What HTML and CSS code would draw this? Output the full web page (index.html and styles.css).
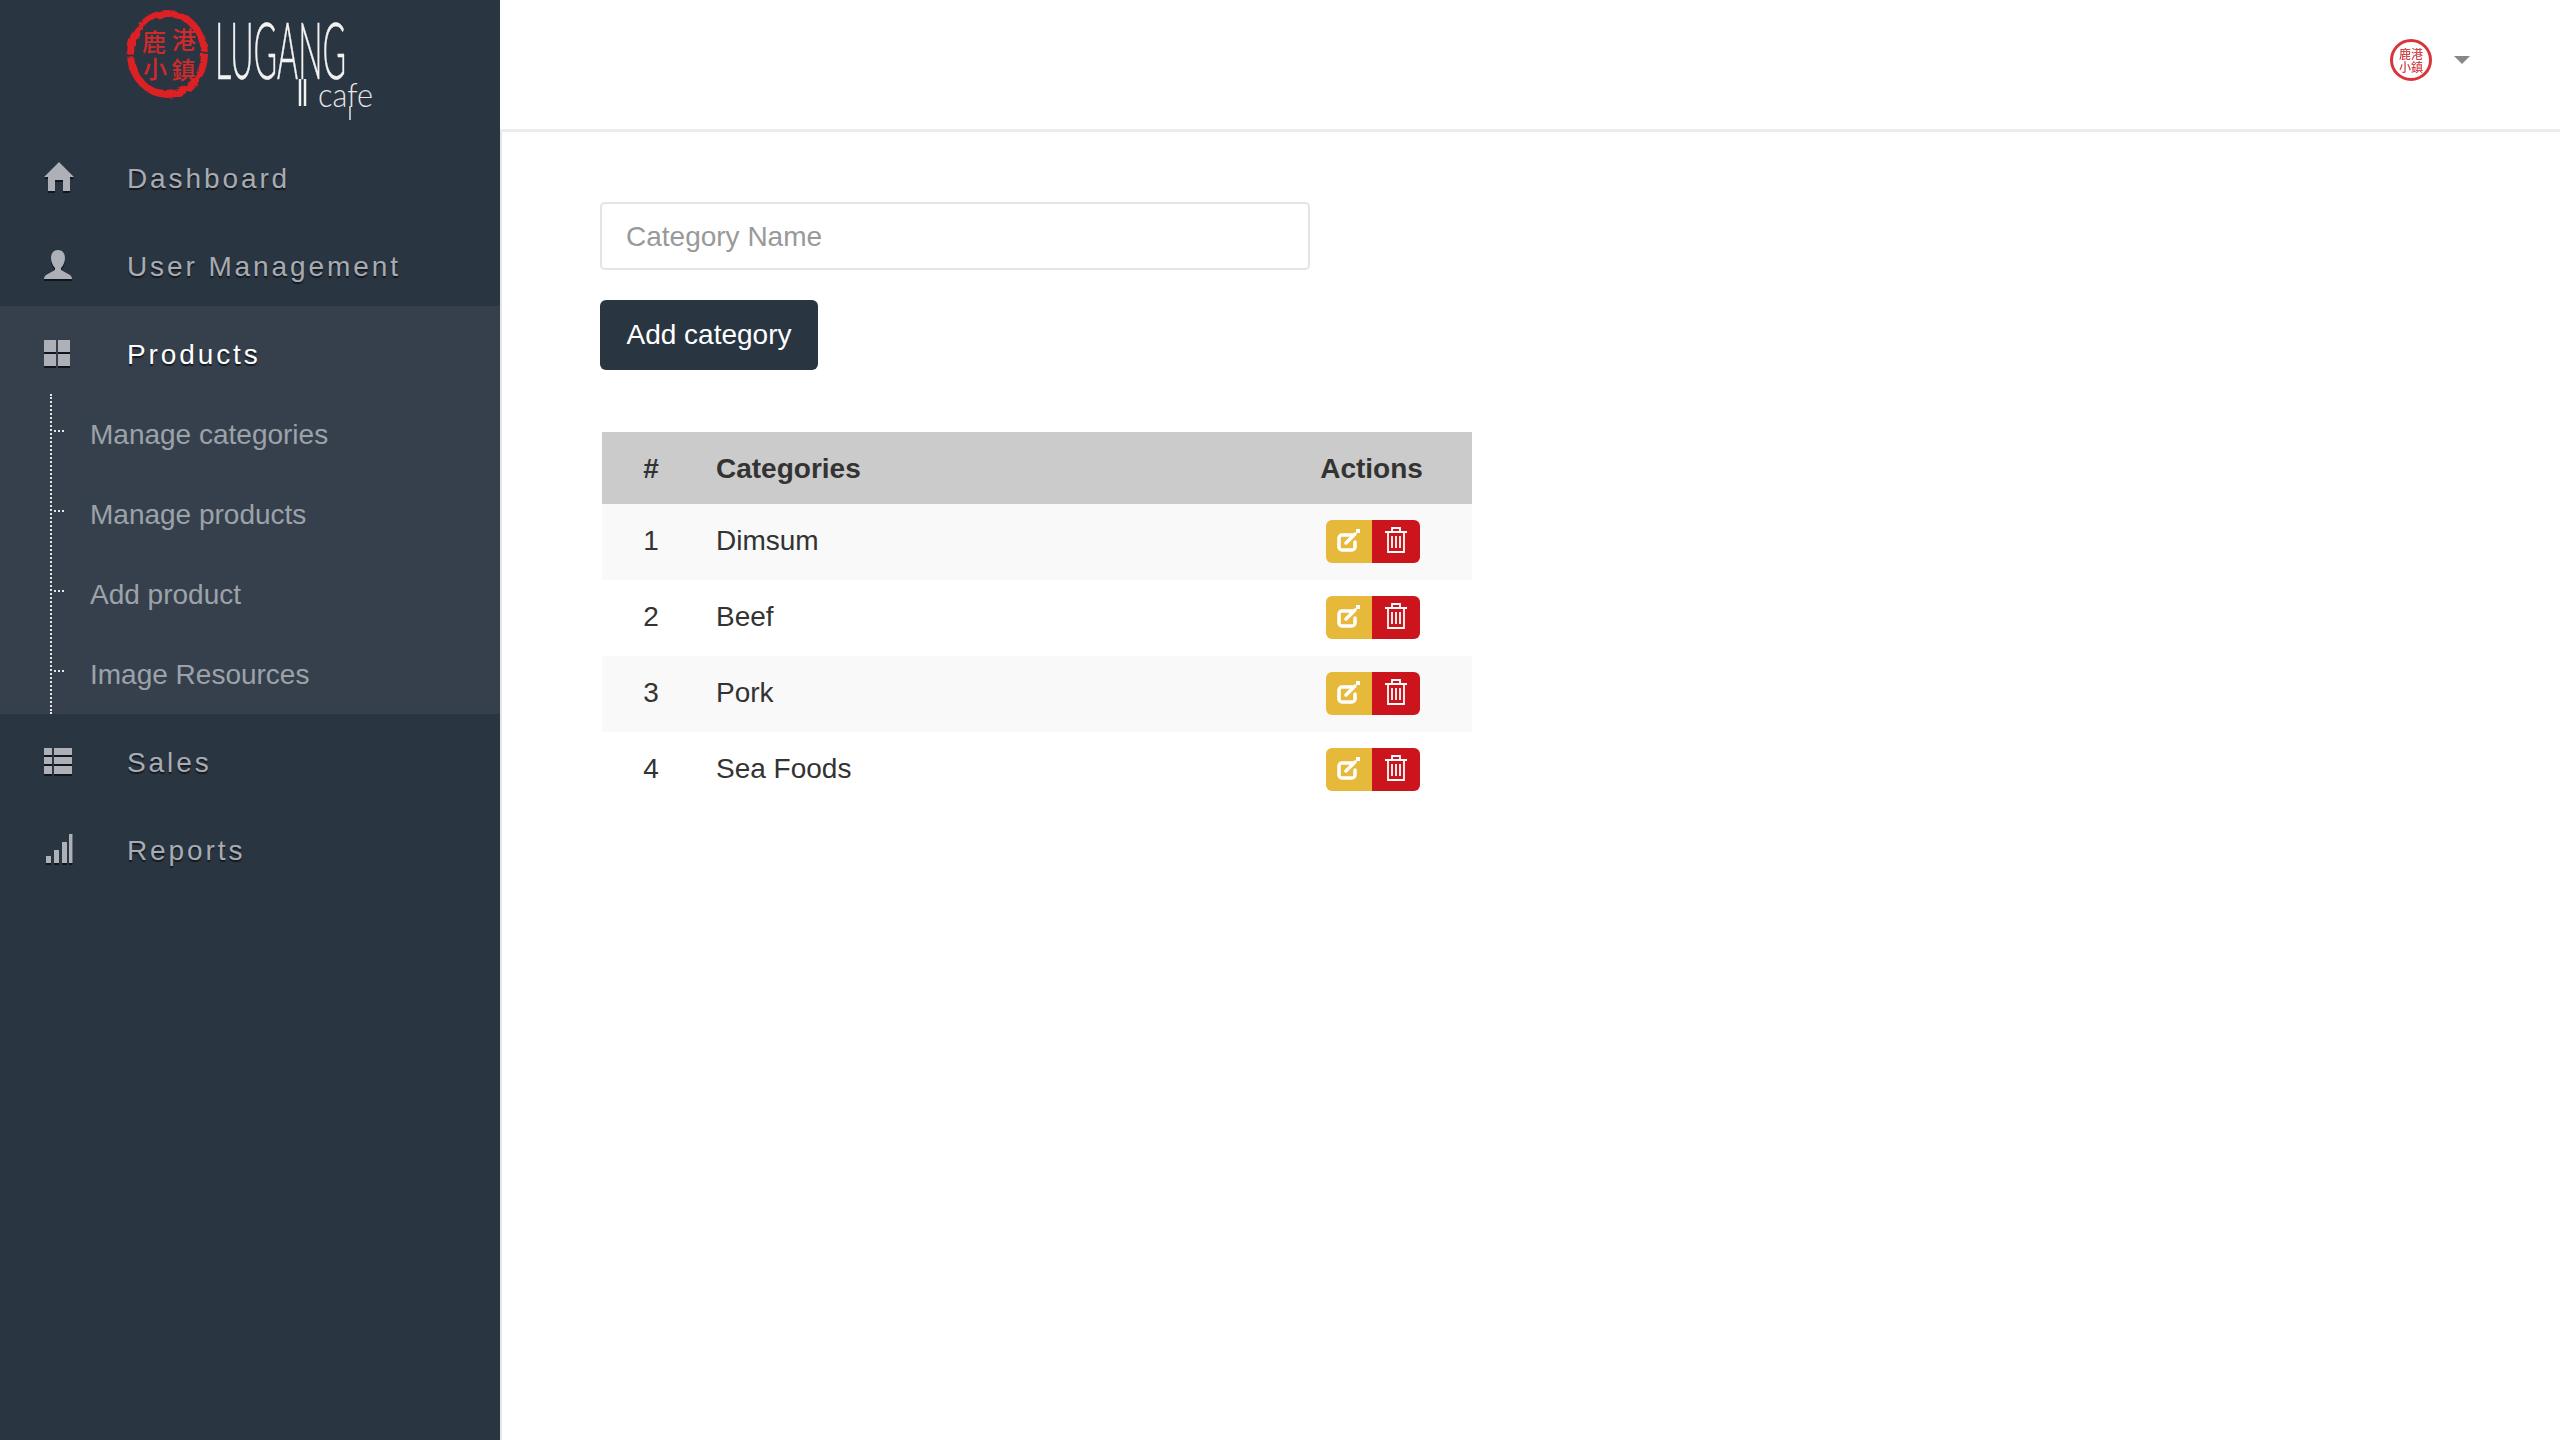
FILE: index.html
```html
<!DOCTYPE html>
<html lang="en">
<head>
<meta charset="utf-8">
<title>Lugang Cafe - Manage categories</title>
<link rel="stylesheet" href="styles.css">
</head>
<body>
<div class="app">
  <aside class="sidebar">
    <div class="brand">
      <svg class="logo" viewBox="0 0 250 122" width="250" height="122">
        <defs>
          <filter id="rough" x="-10%" y="-10%" width="120%" height="120%" color-interpolation-filters="sRGB">
            <feTurbulence type="fractalNoise" baseFrequency="0.12" numOctaves="2" seed="4"/>
            <feDisplacementMap in="SourceGraphic" scale="5"/>
          </filter>
          <filter id="soft"><feGaussianBlur stdDeviation="0.45"/></filter>
        </defs>
        <ellipse class="ring" cx="42.500" cy="44" rx="37" ry="40.500" filter="url(#rough)"/>
        <text class="seal" x="29 59 30 58.500" y="41 39 68 69">鹿港小鎮</text>
        <text class="wordmark" x="90" y="69" textLength="131" lengthAdjust="spacingAndGlyphs">LUGANG</text>
        <line class="leg" x1="175" y1="69" x2="175" y2="96"/>
        <line class="leg" x1="180" y1="69" x2="180" y2="96"/>
        <text class="cafe" x="193" y="97" textLength="55" lengthAdjust="spacingAndGlyphs">cafe</text>
        <line class="leg-thin" x1="225" y1="96" x2="225" y2="110"/>
      </svg>
    </div>
    <nav class="nav">
      <a class="nav-item">
        <svg class="nav-icon" viewBox="0 0 30 30"><path d="M15 0 30 15h-4v14h-7V18h-8v11H4V15H0z"/></svg>
        <span class="nav-label">Dashboard</span>
      </a>
      <a class="nav-item">
        <svg class="nav-icon" viewBox="0 0 30 30"><path d="M14 0c5 0 7 4 7 8 0 4-2 8-4 10v2l9 5c1 1 2 2 2 4H0c0-2 1-3 2-4l9-5v-2C9 16 7 12 7 8c0-4 2-8 7-8z"/></svg>
        <span class="nav-label">User Management</span>
      </a>
      <div class="group">
        <a class="nav-item nav-item-active">
          <svg class="nav-icon" viewBox="0 0 30 30"><path d="M0 2h12v12H0zM14 2h12v12H14zM0 16h12v12H0zM14 16h12v12H14z"/></svg>
          <span class="nav-label">Products</span>
        </a>
        <ul class="subnav">
          <li class="sub-item">Manage categories</li>
          <li class="sub-item">Manage products</li>
          <li class="sub-item">Add product</li>
          <li class="sub-item">Image Resources</li>
        </ul>
      </div>
      <a class="nav-item">
        <svg class="nav-icon" viewBox="0 0 30 30"><path d="M0 2h8v7H0zM10 2h18v7H10zM0 11h8v7H0zM10 11h18v7H10zM0 20h8v8H0zM10 20h18v8H10z"/></svg>
        <span class="nav-label">Sales</span>
      </a>
      <a class="nav-item">
        <svg class="nav-icon" viewBox="0 0 30 30"><path d="M2 22h5v7H2zM10 16h5v13h-5zM18 8h5v21h-5zM25 0h3.500v29H25z"/></svg>
        <span class="nav-label">Reports</span>
      </a>
    </nav>
  </aside>
  <div class="main">
    <header class="topbar">
      <div class="profile">
        <svg class="avatar" viewBox="0 0 44 44" width="44" height="44">
          <g filter="url(#soft)">
            <circle class="avatar-ring" cx="22" cy="22" r="19.500"/>
            <text class="avatar-seal" x="16 28 16 28" y="21 21 34 34">鹿港小鎮</text>
          </g>
        </svg>
        <span class="caret"></span>
      </div>
    </header>
    <main class="content">
      <input class="field" type="text" placeholder="Category Name">
      <button class="btn-primary" type="button">Add category</button>
      <table class="table">
        <colgroup>
          <col class="col-num">
          <col class="col-name">
          <col class="col-actions">
        </colgroup>
        <thead>
          <tr><th class="center">#</th><th>Categories</th><th class="center">Actions</th></tr>
        </thead>
        <tbody>
          <tr>
            <td class="center">1</td><td>Dimsum</td>
            <td class="center"><div class="actions">
              <button class="act act-edit" type="button"><svg class="act-icon" viewBox="0 0 26 24"><path class="stroke" d="M16 6H6a3 3 0 0 0-3 3v9a3 3 0 0 0 3 3h10a3 3 0 0 0 3-3v-5"/><path class="stroke" d="M10 14 19 5"/><path class="solid" d="M20 0h4v4h-4z"/></svg></button>
              <button class="act act-del" type="button"><svg class="act-icon" viewBox="0 0 22 26"><path class="stroke-thin" d="M0 5h22M7 5V1h8v4M3 5v20h16V5M7 9v12M11 9v12M15 9v12"/></svg></button>
            </div></td>
          </tr>
          <tr>
            <td class="center">2</td><td>Beef</td>
            <td class="center"><div class="actions">
              <button class="act act-edit" type="button"><svg class="act-icon" viewBox="0 0 26 24"><path class="stroke" d="M16 6H6a3 3 0 0 0-3 3v9a3 3 0 0 0 3 3h10a3 3 0 0 0 3-3v-5"/><path class="stroke" d="M10 14 19 5"/><path class="solid" d="M20 0h4v4h-4z"/></svg></button>
              <button class="act act-del" type="button"><svg class="act-icon" viewBox="0 0 22 26"><path class="stroke-thin" d="M0 5h22M7 5V1h8v4M3 5v20h16V5M7 9v12M11 9v12M15 9v12"/></svg></button>
            </div></td>
          </tr>
          <tr>
            <td class="center">3</td><td>Pork</td>
            <td class="center"><div class="actions">
              <button class="act act-edit" type="button"><svg class="act-icon" viewBox="0 0 26 24"><path class="stroke" d="M16 6H6a3 3 0 0 0-3 3v9a3 3 0 0 0 3 3h10a3 3 0 0 0 3-3v-5"/><path class="stroke" d="M10 14 19 5"/><path class="solid" d="M20 0h4v4h-4z"/></svg></button>
              <button class="act act-del" type="button"><svg class="act-icon" viewBox="0 0 22 26"><path class="stroke-thin" d="M0 5h22M7 5V1h8v4M3 5v20h16V5M7 9v12M11 9v12M15 9v12"/></svg></button>
            </div></td>
          </tr>
          <tr>
            <td class="center">4</td><td>Sea Foods</td>
            <td class="center"><div class="actions">
              <button class="act act-edit" type="button"><svg class="act-icon" viewBox="0 0 26 24"><path class="stroke" d="M16 6H6a3 3 0 0 0-3 3v9a3 3 0 0 0 3 3h10a3 3 0 0 0 3-3v-5"/><path class="stroke" d="M10 14 19 5"/><path class="solid" d="M20 0h4v4h-4z"/></svg></button>
              <button class="act act-del" type="button"><svg class="act-icon" viewBox="0 0 22 26"><path class="stroke-thin" d="M0 5h22M7 5V1h8v4M3 5v20h16V5M7 9v12M11 9v12M15 9v12"/></svg></button>
            </div></td>
          </tr>
        </tbody>
      </table>
    </main>
  </div>
</div>
</body>
</html>
```

FILE: styles.css
```css
* { box-sizing: border-box; }
html, body { margin: 0; height: 100%; }
body {
  font-family: "Liberation Sans", Arial, sans-serif;
  font-size: 28px;
  color: #333;
  background: #fff;
  overflow: hidden;
}
.app { display: flex; height: 1440px; }

/* sidebar */
.sidebar { flex: 0 0 500px; background: #2a3542; }
.brand { height: 130px; padding: 10px 0 0 125px; }
.logo { display: block; overflow: visible; }
.ring {
  fill: none;
  stroke: #dc2024;
  stroke-width: 7;
  stroke-dasharray: 118 3 120 2;
}
.seal {
  font-family: "Noto Sans CJK TC", sans-serif;
  font-size: 24px;
  font-weight: 500;
  fill: #cf2a2c;
  text-anchor: middle;
}
.wordmark {
  font-family: Lato, sans-serif;
  font-size: 78px;
  font-weight: 300;
  fill: #f2f2f2;
  stroke: #f2f2f2;
  stroke-width: 0.5;
}
.cafe {
  font-family: Lato, sans-serif;
  font-size: 34px;
  font-weight: 300;
  fill: #e6e6e6;
}
.leg { stroke: #f2f2f2; stroke-width: 2.5; }
.leg-thin { stroke: #e6e6e6; stroke-width: 1.5; }

.nav-item {
  display: flex;
  align-items: center;
  height: 88px;
  padding: 10px 0 0 44px;
  color: #a8acb2;
  letter-spacing: 2.9px;
  text-shadow: 0 2px 1px #14191f;
}
.nav-icon {
  flex: 0 0 30px;
  width: 30px;
  height: 30px;
  margin: 0 53px 4px 0;
  fill: #adb1b7;
  filter: drop-shadow(0 2px 0 #11161c);
}
.nav-item-active { color: #fff; }
.group { background: #36404d; }
.subnav {
  list-style: none;
  margin: 0 0 0 50px;
  padding: 0;
  border-left: 2px dotted #e8e8e8;
}
.sub-item {
  position: relative;
  height: 80px;
  line-height: 82px;
  padding-left: 38px;
  color: #9da2a9;
}
.sub-item::before {
  content: "";
  position: absolute;
  left: 2px;
  top: 36px;
  width: 12px;
  height: 2px;
  background: repeating-linear-gradient(90deg, #e8e8e8 0 2px, transparent 2px 4px);
}

/* main */
.main { flex: 1; display: flex; flex-direction: column; min-width: 0; }
.topbar {
  height: 132px;
  flex: none;
  display: flex;
  justify-content: flex-end;
  align-items: center;
  padding: 0 90px 10px 0;
  border-bottom: 3px solid #ececec;
}
.profile { display: flex; align-items: center; gap: 21px; }
.avatar { display: block; overflow: visible; }
.avatar-ring { fill: none; stroke: #d8353a; stroke-width: 3; }
.avatar-seal {
  font-family: "Noto Sans CJK TC", sans-serif;
  font-size: 12px;
  font-weight: 500;
  fill: #d2474b;
  text-anchor: middle;
}
.caret {
  width: 0;
  height: 0;
  border-left: 8px solid transparent;
  border-right: 8px solid transparent;
  border-top: 8px solid #888;
}
.content {
  flex: 1;
  display: flex;
  flex-direction: column;
  align-items: flex-start;
  padding: 70px 0 0 98px;
  border-left: 2px solid #e6e6e6;
}
.field {
  display: block;
  width: 710px;
  height: 68px;
  margin: 0 0 30px;
  padding: 2px 24px 0;
  border: 2px solid #e4e4e4;
  border-radius: 5px;
  font: inherit;
  color: #333;
  background: #fff;
  outline: none;
}
.field::placeholder { color: #999; opacity: 1; }
.btn-primary {
  display: block;
  width: 218px;
  height: 70px;
  margin: 0 0 62px;
  padding: 0;
  border: 0;
  border-radius: 6px;
  background: #2a3542;
  color: #fff;
  font: inherit;
}
.table {
  width: 870px;
  margin-left: 2px;
  border-collapse: collapse;
  table-layout: fixed;
}
.col-num { width: 98px; }
.col-actions { width: 201px; }
.table th {
  height: 72px;
  padding: 2px 16px 0;
  background: #cbcbcb;
  font-weight: 700;
  text-align: left;
}
.table td { height: 76px; padding: 0 16px 2px; }
.table tbody tr:nth-child(odd) { background: #f9f9f9; }
.table .center { text-align: center; }
.actions { display: flex; justify-content: center; padding-left: 3px; }
.act {
  display: flex;
  align-items: center;
  justify-content: center;
  height: 43px;
  padding: 0;
  border: 0;
}
.act-edit { width: 46px; background: #e6b93a; border-radius: 6px 0 0 6px; }
.act-del { width: 48px; background: #cc141d; border-radius: 0 6px 6px 0; }
.act-edit .act-icon { width: 26px; height: 24px; }
.act-del .act-icon { width: 22px; height: 26px; margin-bottom: 2px; }
.act-icon { display: block; fill: none; }
.stroke { fill: none; stroke: #fff; stroke-width: 3.5; stroke-linecap: round; }
.solid { fill: #fff; }
.stroke-thin { fill: none; stroke: #fff; stroke-width: 1.8; }
```
